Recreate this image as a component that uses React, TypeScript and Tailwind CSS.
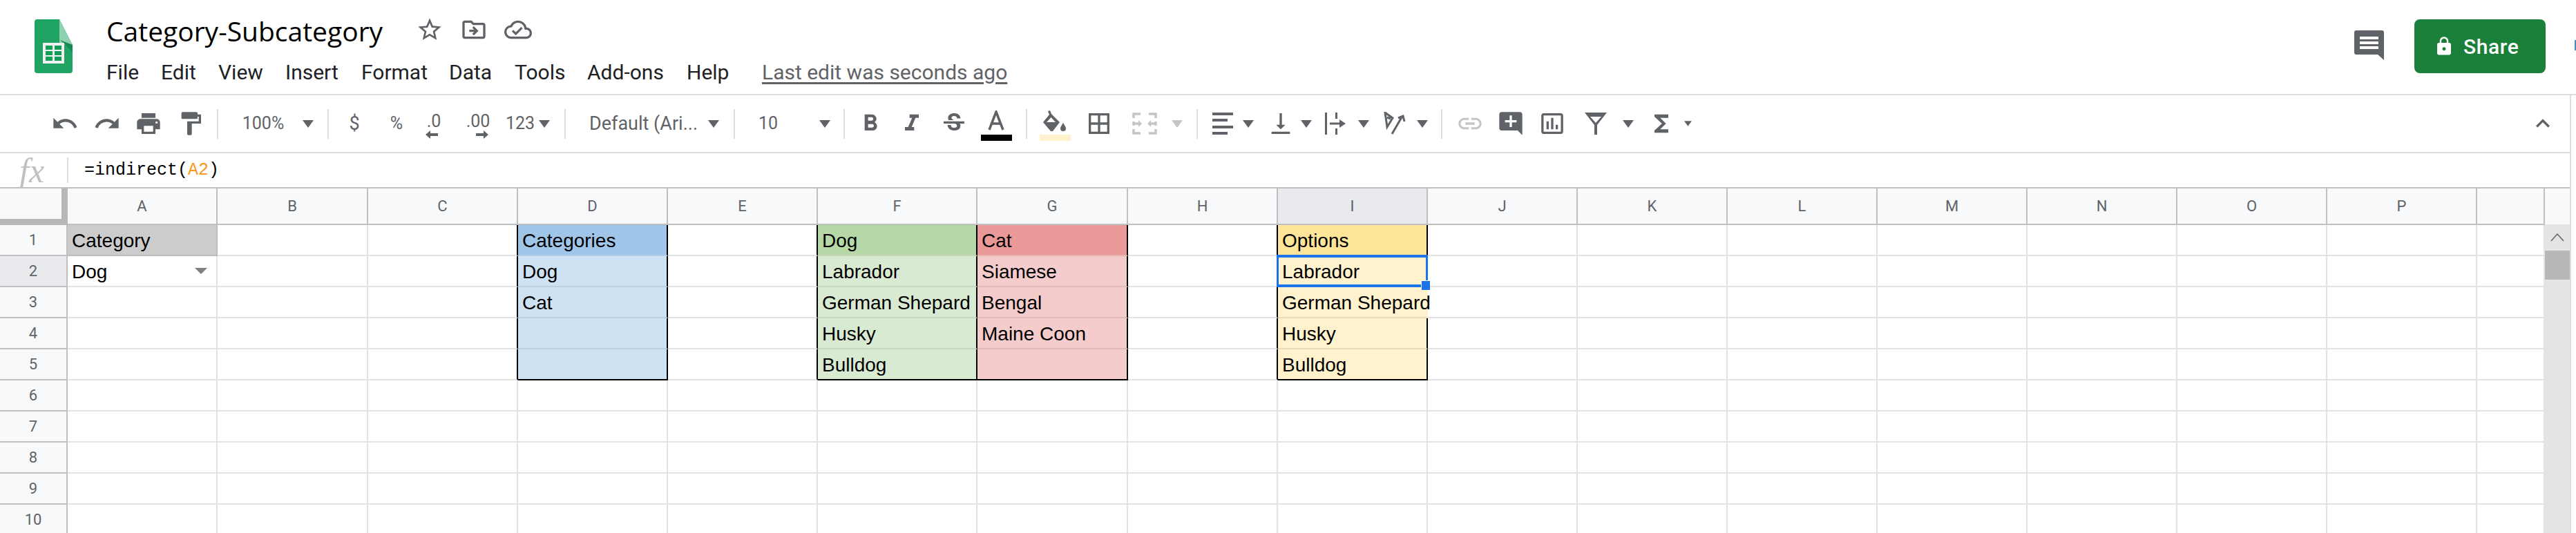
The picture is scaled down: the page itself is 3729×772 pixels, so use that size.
import type { ReactNode } from 'react';
import {
  MdUndo,
  MdRedo,
  MdPrint,
  MdFormatPaint,
  MdFormatBold,
  MdFormatItalic,
  MdStrikethroughS,
  MdBorderAll,
  MdVerticalAlignBottom,
  MdLink,
  MdAddComment,
  MdInsertChartOutlined,
  MdFunctions,
  MdExpandLess,
  MdLock,
  MdStarBorder,
  MdOutlineDriveFileMove,
  MdOutlineCloudDone,
} from 'react-icons/md';

const columns = ['A', 'B', 'C', 'D', 'E', 'F', 'G', 'H', 'I', 'J', 'K', 'L', 'M', 'N', 'O', 'P', ''];
const rows = [1, 2, 3, 4, 5, 6, 7, 8, 9, 10];

const gridCols =
  'grid grid-cols-[98px_217px_218px_217px_217px_217px_231px_218px_217px_217px_217px_217px_217px_217px_217px_217px_217px_98px]';

const Logo = () => (
  <svg width="55" height="78" viewBox="0 0 55 78">
    <path d="M4 0H36L55 37V74a4 4 0 0 1-4 4H4a4 4 0 0 1-4-4V4a4 4 0 0 1 4-4z" fill="#1fa463" />
    <path d="M36 0L55 37H41a5 5 0 0 1-5-5z" fill="#8ed1b1" />
    <path d="M37 30L55 37V47z" fill="#178a52" />
    <rect x="12" y="34" width="31" height="30" fill="#f1f1f1" />
    <rect x="16" y="38" width="10" height="6" fill="#0f9d58" />
    <rect x="29" y="38" width="10" height="6" fill="#0f9d58" />
    <rect x="16" y="46" width="10" height="6" fill="#0f9d58" />
    <rect x="29" y="46" width="10" height="6" fill="#0f9d58" />
    <rect x="16" y="54" width="10" height="6" fill="#0f9d58" />
    <rect x="29" y="54" width="10" height="6" fill="#0f9d58" />
  </svg>
);

const Caret = ({ className = '', muted = false, small = false }: { className?: string; muted?: boolean; small?: boolean }) => (
  <span className={`flex w-[20px] h-[40px] shrink-0 items-center justify-center ${className}`}>
    <svg width={small ? 11 : 16} height={small ? 8 : 11} viewBox="0 0 16 11">
      <path d="M0 0H16L8 11z" fill={muted ? '#c4c5c7' : '#5f6368'} />
    </svg>
  </span>
);

const Slot = ({ className = '', children }: { className?: string; children: ReactNode }) => (
  <span className={`flex h-[40px] shrink-0 items-center justify-center text-[#5f6368] ${className}`}>{children}</span>
);

const Divider = ({ className = '' }: { className?: string }) => (
  <span className={`h-[43px] w-[2px] shrink-0 bg-[#dadce0] ${className}`} />
);

const Toolbar = () => (
  <div className="flex h-[84px] items-center border-b-2 border-[#dadce0] pl-[74px] pr-[19px] font-['Roboto',sans-serif]">
    <Slot className="w-[40px]"><MdUndo size={40} /></Slot>
    <Slot className="ml-[21px] w-[40px]"><MdRedo size={40} /></Slot>
    <Slot className="ml-[20px] w-[40px]"><MdPrint size={42} /></Slot>
    <Slot className="ml-[21px] w-[40px]"><MdFormatPaint size={40} /></Slot>
    <Divider className="ml-[18px]" />
    <Slot className="ml-[23px] w-[84px] text-[25px]">100%</Slot>
    <Caret className="ml-[13px]" />
    <Divider className="ml-[18px]" />
    <Slot className="ml-[17px] w-[40px] text-[27px]">$</Slot>
    <Slot className="ml-[21px] w-[40px] text-[25px]">%</Slot>
    <Slot className="ml-[14px] w-[40px] relative text-[25px]">
      <span className="-mt-[6px]">.0</span>
      <svg className="absolute left-[8px] top-[30px]" width="18" height="12" viewBox="0 0 18 12">
        <path d="M0 6L7 0V4H18V8H7V12z" fill="#5f6368" />
      </svg>
    </Slot>
    <Slot className="ml-[19px] w-[50px] relative text-[25px]">
      <span className="-mt-[6px]">.00</span>
      <svg className="absolute left-[22px] top-[30px]" width="18" height="12" viewBox="0 0 18 12">
        <path d="M18 6L11 0V4H0V8H11V12z" fill="#5f6368" />
      </svg>
    </Slot>
    <Slot className="ml-[14px] w-[44px] text-[25px]">123</Slot>
    <Caret className="ml-[3px]" />
    <Divider className="ml-[19px]" />
    <Slot className="ml-[34px] w-[162px] justify-start! whitespace-nowrap text-[27px]">Default (Ari...</Slot>
    <Caret className="ml-[8px]" />
    <Divider className="ml-[19px]" />
    <Slot className="ml-[28px] w-[40px] text-[25px]">10</Slot>
    <Caret className="ml-[52px]" />
    <Divider className="ml-[17px]" />
    <Slot className="ml-[17px] w-[40px]"><MdFormatBold size={44} /></Slot>
    <Slot className="ml-[20px] w-[40px]"><MdFormatItalic size={44} /></Slot>
    <Slot className="ml-[21px] w-[40px]"><MdStrikethroughS size={40} /></Slot>
    <span className="ml-[21px] flex h-[48px] w-[40px] shrink-0 translate-y-[5px] flex-col items-center">
      <svg width="32" height="30" viewBox="0 0 32 30">
        <path d="M6 28L16 2L26 28M10 19H22" fill="none" stroke="#5f6368" strokeWidth="3.5" />
      </svg>
      <span className="mt-[5px] h-[9px] w-[45px] shrink-0 bg-black" />
    </span>
    <Divider className="ml-[23px]" />
    <span className="ml-[17px] flex h-[48px] w-[46px] shrink-0 translate-y-[5px] flex-col items-center">
      <svg width="40" height="30" viewBox="0 0 40 30">
        <path d="M13 0L15 5L27 17L17 30H14L3 17L12 6L10 1z" fill="#5f6368" />
        <path d="M14.5 10L21 17H8z" fill="#fff" />
        <path d="M32 18c2 3 4 6 4 8a4 4 0 0 1-8 0c0-2 2-5 4-8z" fill="#5f6368" />
      </svg>
      <span className="mt-[5px] h-[9px] w-[45px] shrink-0 bg-[#fff2cc]" />
    </span>
    <Slot className="ml-[21px] w-[40px]"><MdBorderAll size={40} /></Slot>
    <Slot className="ml-[26px] w-[40px]">
      <svg width="36" height="32" viewBox="0 0 36 32" fill="none" stroke="#c4c5c7" strokeWidth="3.5">
        <path d="M12 2H2V8M24 2H34V8M12 30H2V24M24 30H34V24M2 13V19M34 13V19" />
        <path d="M2 16H11M34 16H25" />
        <path d="M14 16L9 11V21zM22 16L27 11V21z" fill="#c4c5c7" stroke="none" />
      </svg>
    </Slot>
    <Caret muted className="ml-[17px]" />
    <Divider className="ml-[18px]" />
    <Slot className="ml-[16px] w-[40px]">
      <svg width="32" height="32" viewBox="0 0 32 32" fill="#5f6368">
        <rect x="1" y="0" width="30" height="4" />
        <rect x="1" y="9" width="22" height="4" />
        <rect x="1" y="19" width="30" height="4" />
        <rect x="1" y="28" width="22" height="4" />
      </svg>
    </Slot>
    <Caret className="ml-[7px]" />
    <Slot className="ml-[17px] w-[40px]"><MdVerticalAlignBottom size={40} /></Slot>
    <Caret className="ml-[7px]" />
    <Slot className="ml-[12px] w-[40px]">
      <svg width="32" height="32" viewBox="0 0 32 32" fill="#5f6368">
        <rect x="1" y="0" width="3" height="32" />
        <rect x="16" y="0" width="3" height="9" />
        <rect x="16" y="23" width="3" height="9" />
        <path d="M8 14.5H22V10L31 16L22 22V17.5H8z" />
      </svg>
    </Slot>
    <Caret className="ml-[11px]" />
    <Slot className="ml-[17px] w-[40px]">
      <svg width="36" height="34" viewBox="0 0 36 34" fill="none" stroke="#5f6368" strokeWidth="3">
        <path d="M2 1L13 9L5 22zM5 8L10 10" />
        <path d="M12 32L26 8M21 9L28 6L30 14" />
      </svg>
    </Slot>
    <Caret className="ml-[8px]" />
    <Divider className="ml-[17px]" />
    <Slot className="ml-[20px] w-[40px]"><MdLink size={44} className="text-[#c4c5c7]" /></Slot>
    <Slot className="ml-[19px] w-[40px]"><MdAddComment size={44} /></Slot>
    <Slot className="ml-[20px] w-[40px]"><MdInsertChartOutlined size={44} /></Slot>
    <Slot className="ml-[23px] w-[40px]">
      <svg width="32" height="32" viewBox="0 0 32 32">
        <path d="M0 0H32L18 18V32H14V18z" fill="#5f6368" />
        <path d="M8 6H24L16 15z" fill="#fff" />
      </svg>
    </Slot>
    <Caret className="ml-[17px]" />
    <Slot className="ml-[18px] w-[40px]"><MdFunctions size={44} /></Slot>
    <Caret small className="ml-[8px]" />
    <Slot className="ml-auto w-[40px]"><MdExpandLess size={48} /></Slot>
  </div>
);

const baseCell = 'relative h-[45px] border-r-2 border-b-2 px-[6px] text-[28px] leading-[45px] whitespace-nowrap text-black';

// fills and borders per cell, key is column letter + row number
const cellStyles: Record<string, string> = {
  A1: 'bg-[#cccccc] border-[#bdbdbd]',
  C1: 'border-r-black border-b-[#e2e3e3]',
  C2: 'border-r-black border-b-[#e2e3e3]',
  C3: 'border-r-black border-b-[#e2e3e3]',
  C4: 'border-r-black border-b-[#e2e3e3]',
  C5: 'border-r-black border-b-[#e2e3e3]',
  D1: 'bg-[#9fc5e8] border-r-black border-b-[#b3cfe8]',
  D2: 'bg-[#cfe2f3] border-r-black border-b-[#bdd0e1]',
  D3: 'bg-[#cfe2f3] border-r-black border-b-[#bdd0e1]',
  D4: 'bg-[#cfe2f3] border-r-black border-b-[#bdd0e1]',
  D5: 'bg-[#cfe2f3] border-r-black border-b-black',
  E1: 'border-r-black border-b-[#e2e3e3]',
  E2: 'border-r-black border-b-[#e2e3e3]',
  E3: 'border-r-black border-b-[#e2e3e3]',
  E4: 'border-r-black border-b-[#e2e3e3]',
  E5: 'border-r-black border-b-[#e2e3e3]',
  F1: 'bg-[#b6d7a8] border-r-black border-b-[#c4d7bc]',
  F2: 'bg-[#d9ead3] border-r-black border-b-[#c6d6c1]',
  F3: 'bg-[#d9ead3] border-r-black border-b-[#c6d6c1]',
  F4: 'bg-[#d9ead3] border-r-black border-b-[#c6d6c1]',
  F5: 'bg-[#d9ead3] border-r-black border-b-black',
  G1: 'bg-[#ea9999] border-r-black border-b-[#e8b0b0]',
  G2: 'bg-[#f4cccc] border-r-black border-b-[#dfbbbb]',
  G3: 'bg-[#f4cccc] border-r-black border-b-[#dfbbbb]',
  G4: 'bg-[#f4cccc] border-r-black border-b-[#dfbbbb]',
  G5: 'bg-[#f4cccc] border-r-black border-b-black',
  H1: 'border-r-black border-b-[#e2e3e3]',
  H2: 'border-r-black border-b-[#e2e3e3]',
  H3: 'border-r-black border-b-[#e2e3e3]',
  H4: 'border-r-black border-b-[#e2e3e3]',
  H5: 'border-r-black border-b-[#e2e3e3]',
  I1: 'bg-[#ffe599] border-r-black border-b-[#f2dfa8]',
  I2: 'bg-[#fff2cc] border-r-black border-b-[#e8dcba]',
  I3: 'bg-[#fff2cc] border-r-[#fff2cc] border-b-[#e8dcba]',
  I4: 'bg-[#fff2cc] border-r-black border-b-[#e8dcba]',
  I5: 'bg-[#fff2cc] border-r-black border-b-black',
};

const cellText: Record<string, string> = {
  A1: 'Category',
  A2: 'Dog',
  D1: 'Categories',
  D2: 'Dog',
  D3: 'Cat',
  F1: 'Dog',
  F2: 'Labrador',
  F3: 'German Shepard',
  F4: 'Husky',
  F5: 'Bulldog',
  G1: 'Cat',
  G2: 'Siamese',
  G3: 'Bengal',
  G4: 'Maine Coon',
  I1: 'Options',
  I2: 'Labrador',
  I3: 'German Shepard',
  I4: 'Husky',
  I5: 'Bulldog',
};

const Sheet = () => (
  <div className="flex">
    <div className="w-[3684px] shrink-0 overflow-hidden">
      <div className={`${gridCols} h-[55px] border-t-2 border-b-2 border-[#c0c0c0] bg-[#f8f9fa] font-['Roboto',sans-serif] text-[22px] leading-[51px] text-[#5f6368]`}>
        <div className="relative border-r-2 border-[#c0c0c0]">
          <div className="absolute right-[-2px] top-0 bottom-[-2px] w-[9px] bg-[#b7b7b7]" />
          <div className="absolute left-0 right-0 bottom-[-2px] h-[9px] bg-[#b7b7b7]" />
        </div>
        {columns.map(col => (
          <div
            key={col}
            className={`border-r-2 border-[#c0c0c0] text-center ${col === 'I' ? 'bg-[#e8eaed]' : ''}`}
          >
            {col}
          </div>
        ))}
      </div>
      {rows.map(row => (
        <div key={row} className={gridCols}>
          <div
            className={`h-[45px] border-r-2 border-b-2 border-[#c0c0c0] text-center font-['Roboto',sans-serif] text-[22px] leading-[44px] text-[#5f6368] ${
              row === 2 ? 'bg-[#e8eaed]' : 'bg-[#f8f9fa]'
            }`}
          >
            {row}
          </div>
          {columns.map(col => {
            const key = `${col}${row}`;
            return (
              <div
                key={key}
                className={`${baseCell} font-['Liberation_Sans',sans-serif] ${cellStyles[key] ?? 'border-[#e2e3e3]'}`}
              >
                {cellText[key]}
                {key === 'A2' && (
                  <svg className="absolute right-[13px] top-[17px]" width="18" height="9" viewBox="0 0 18 9">
                    <path d="M0 0H18L9 9z" fill="#808080" />
                  </svg>
                )}
                {key === 'I2' && (
                  <div className="absolute -top-[2px] -left-[2px] -right-[2px] -bottom-[2px] z-10 border-[3px] border-t-4 border-b-4 border-[#1a73e8]">
                    <span className="absolute -right-[6px] -bottom-[8px] h-[14px] w-[13px] border-t border-l border-white bg-[#1a73e8]" />
                  </div>
                )}
              </div>
            );
          })}
        </div>
      ))}
    </div>
    <div className="flex w-[36px] shrink-0 flex-col">
      <div className="h-[54px] border-t-2 border-[#c0c0c0] bg-[#f8f9fa]" />
      <div className="flex h-[38px] items-center justify-center bg-[#e4e4e4]">
        <svg width="20" height="12" viewBox="0 0 20 12">
          <path d="M1 11L10 1L19 11" fill="none" stroke="#5f6368" strokeWidth="1.5" />
        </svg>
      </div>
      <div className="h-[42px] bg-[#b7b7b7]" />
      <div className="flex-1 bg-[#e4e4e4]" />
    </div>
  </div>
);

export default function App() {
  return (
    <div className="relative h-[772px] w-[3729px] overflow-hidden bg-white">
      <div className="flex h-[138px] items-start border-b-2 border-[#dadce0]">
        <div className="ml-[50px] mt-[28px]">
          <Logo />
        </div>
        <div className="ml-[49px] flex flex-col">
          <div className="mt-[20px] flex h-[50px] items-center">
            <span className="w-[448px] whitespace-nowrap font-['Open_Sans',sans-serif] text-[39px] leading-[50px] text-black">
              Category-Subcategory
            </span>
            <MdStarBorder size={40} className="-mt-[4px] text-[#5f6368]" />
            <MdOutlineDriveFileMove size={40} className="-mt-[4px] ml-[24px] text-[#5f6368]" />
            <MdOutlineCloudDone size={40} className="-mt-[4px] ml-[24px] text-[#5f6368]" />
          </div>
          <div className="mt-[14px] flex h-[40px] items-center whitespace-nowrap font-['Roboto',sans-serif] text-[30px] text-[#202124]">
            <span className="w-[79px]">File</span>
            <span className="w-[83px]">Edit</span>
            <span className="w-[97px]">View</span>
            <span className="w-[110px]">Insert</span>
            <span className="w-[127px]">Format</span>
            <span className="w-[95px]">Data</span>
            <span className="w-[105px]">Tools</span>
            <span className="w-[144px]">Add-ons</span>
            <span className="w-[109px]">Help</span>
            <span className="text-[#5f6368] underline underline-offset-4">Last edit was seconds ago</span>
          </div>
        </div>
        <svg className="ml-auto mt-[44px]" width="43" height="43" viewBox="0 0 43 43">
          <path d="M3 0H40a3 3 0 0 1 3 3V43L34 35H3a3 3 0 0 1-3-3V3a3 3 0 0 1 3-3z" fill="#5f6368" />
          <path d="M8 9H35V13H8zM8 16H35V20H8zM8 23H35V27H8z" fill="#fff" />
        </svg>
        <div className="ml-[44px] mt-[28px] flex h-[78px] w-[190px] items-center rounded-lg bg-[#1a8039] pl-[28px] font-['Roboto',sans-serif] text-[30px] font-medium tracking-[0.6px] text-white">
          <MdLock size={30} />
          <span className="ml-[13px]">Share</span>
        </div>
        <div className="ml-[42px] mt-[58px] h-[15px] w-[2px] bg-[#3f8bc4]" />
      </div>
      <div className="w-[3722px] border-r-2 border-[#dadce0]">
        <Toolbar />
        <div className="flex h-[49px] items-center">
          <span className="w-[97px] pl-[28px] font-['Liberation_Serif',serif] text-[50px] italic leading-none text-[#c0c0c0]">
            fx
          </span>
          <span className="h-[37px] w-[2px] bg-[#dadce0]" />
          <span className="ml-[23px] font-['Liberation_Mono',monospace] text-[25px] text-black">
            =indirect(<span className="text-[#f7981d]">A2</span>)
          </span>
        </div>
        <Sheet />
      </div>
    </div>
  );
}
